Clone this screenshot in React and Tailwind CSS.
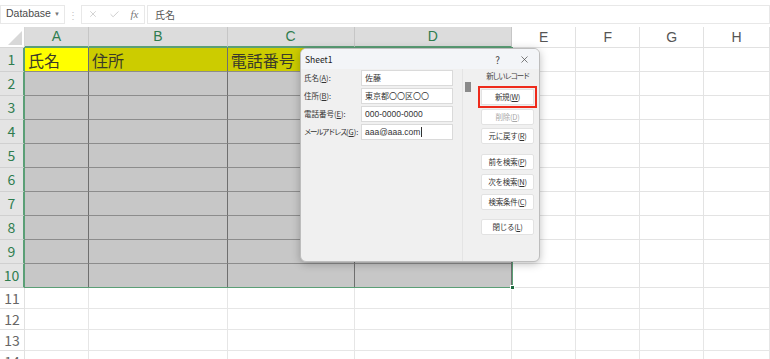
import { X, Check } from 'lucide-react'

const cols = [
  { l: 'A', w: 'w-[64px]', sel: true },
  { l: 'B', w: 'w-[139px]', sel: true },
  { l: 'C', w: 'w-[127px]', sel: true },
  { l: 'D', w: 'w-[158px]', sel: true },
  { l: 'E', w: 'w-[64px]' },
  { l: 'F', w: 'w-[64px]' },
  { l: 'G', w: 'w-[64px]' },
  { l: 'H', w: 'w-[66px]' }
]

const headerTexts = ['氏名', '住所', '電話番号', '']

const FormulaBar = () => (
  <div className="h-[27px] flex items-center pt-[1px] text-[#555]">
    <div className="w-[65px] h-[19px] flex items-center justify-between pl-[5px] pr-[4px] border border-[#e8e8e8] text-[10.5px] text-[#4a4a4a] font-['Liberation_Sans',sans-serif]">
      <span>Database</span>
      <span className="text-[6px] text-[#777]">▼</span>
    </div>
    <div className="w-[16px] text-center text-[10px] text-[#c4c4c4]">⋮</div>
    <div className="w-[64px] h-[19px] flex items-center justify-around border border-[#e8e8e8] text-[#b8b8b8]">
      <X className="w-[10px] h-[10px]" strokeWidth={1.5} />
      <Check className="w-[11px] h-[11px]" strokeWidth={1.5} />
      <span className="font-['Liberation_Serif',serif] italic text-[11px] text-[#777]">fx</span>
    </div>
    <div className="flex-1 h-[19px] ml-[2px] flex items-center pl-[7px] border border-[#e8e8e8] text-[10px] text-[#555]">
      氏名
    </div>
  </div>
)

const ColumnHeader = () => (
  <div className="flex h-[21px]">
    <div className="w-[25px] h-full border-r border-b border-[#d6d6d6] bg-white relative overflow-hidden">
      <div className="absolute right-[2px] bottom-[2px] w-0 h-0 border-l-[14px] border-l-transparent border-b-[14px] border-b-[#d8d8d8]" />
    </div>
    {cols.map((c) =>
      c.sel ? (
        <div
          key={c.l}
          className={`${c.w} h-full flex items-center justify-center bg-[#dcdcdc] border-r border-[#c6c6c6] border-b-2 border-b-[#5b9f76] text-[14px] text-[#2f7d4f] font-['Liberation_Sans',sans-serif]`}
        >
          {c.l}
        </div>
      ) : (
        <div
          key={c.l}
          className={`${c.w} h-full flex items-center justify-center bg-white border-r border-b border-[#e1e1e1] text-[14px] text-[#555] font-['Liberation_Sans',sans-serif]`}
        >
          {c.l}
        </div>
      )
    )}
  </div>
)

const SelectedRow = ({ n }) => (
  <div className="flex h-[24px]">
    <div className="w-[25px] h-full flex items-center justify-center bg-[#e4e4e4] border-b border-[#d0d0d0] border-r-2 border-r-[#5b9f76] text-[14px] text-[#2f7d4f]">
      {n}
    </div>
    {cols.map((c, i) =>
      c.sel ? (
        <div
          key={c.l}
          className={`${c.w} h-full flex items-center pl-[3px] border-r border-r-[#6f6f6f] border-b border-b-[#8c8c8c] text-[16px] text-[#3a3a2a] leading-none ${
            n === 1 ? (i === 0 ? 'bg-[#ffff00]' : 'bg-[#cccc00]') : 'bg-[#c7c7c7]'
          }`}
        >
          {n === 1 ? headerTexts[i] : ''}
        </div>
      ) : (
        <div key={c.l} className={`${c.w} h-full bg-white border-r border-b border-[#e3e3e3]`} />
      )
    )}
  </div>
)

const PlainRow = ({ n }) => (
  <div className="flex h-[21px]">
    <div className="w-[25px] h-full flex items-center justify-center bg-white border-r border-b border-[#e1e1e1] text-[14px] text-[#666]">
      {n}
    </div>
    {cols.map((c) => (
      <div key={c.l} className={`${c.w} h-full bg-white border-r border-b border-[#e6e6e6]`} />
    ))}
  </div>
)

const fields = [
  { label: '氏名', key: 'A', value: '佐藤' },
  { label: '住所', key: 'B', value: '東京都〇〇区〇〇' },
  { label: '電話番号', key: 'E', value: '000-0000-0000', latin: true },
  { label: 'メールアドレス', key: 'G', value: 'aaa@aaa.com', latin: true, cursor: true, narrow: true }
]

const DlgButton = ({ text, k, disabled, highlight, className = '' }) => (
  <div
    className={`w-[53px] h-[16px] flex items-center justify-center bg-white border border-[#e2e2e2] text-[7.5px] tracking-[-0.3px] leading-none whitespace-nowrap ${
      disabled ? 'text-[#a8a8a8]' : 'text-[#333]'
    } ${highlight ? 'outline-2 outline-offset-[1px] outline-[#ee2a1b]' : 'rounded-[2px]'} ${className}`}
  >
    {text}(<span className="underline">{k}</span>)
  </div>
)

const Dialog = () => (
  <div className="absolute left-[300px] top-[48px] w-[240px] h-[214px] bg-[#f0f0f0] border border-[#bdbdbd] rounded-[6px] shadow-[0_2px_8px_rgba(0,0,0,0.25)] overflow-hidden flex flex-col">
    {/* title bar */}
    <div className="h-[20px] flex items-center justify-between pl-[4px] pr-[9px] bg-[#f3f5f8] text-[8.5px] text-[#222]">
      <span>Sheet1</span>
      <div className="flex items-center gap-[19px] text-[10px] text-[#444]">
        <span>?</span>
        <X className="w-[11px] h-[11px]" strokeWidth={1.5} />
      </div>
    </div>
    <div className="flex-1 flex">
      {/* fields */}
      <div className="w-[162px] pt-[1px] pl-[3px] flex flex-col gap-[2px] border-r border-[#e4e4e4]">
        {fields.map((f) => (
          <div key={f.key} className="flex items-center h-[16px]">
            <span className="w-[57px] text-[7.5px] text-[#333] whitespace-nowrap leading-none">
              <span className={f.narrow ? 'tracking-[-1.5px]' : ''}>{f.label}</span>(<span className="underline">{f.key}</span>):
            </span>
            <div
              className={`w-[92px] h-[16px] flex items-center pl-[3px] bg-white border border-[#dadada] text-[#333] leading-none ${
                f.latin ? "font-['Liberation_Sans',sans-serif] text-[8.5px]" : 'text-[8px]'
              }`}
            >
              {f.value}
              {f.cursor && <span className="ml-[1px] w-px h-[10px] bg-[#333]" />}
            </div>
          </div>
        ))}
      </div>
      {/* scrollbar */}
      <div className="w-[10px] pt-[13px] flex justify-center">
        <div className="w-[6px] h-[10px] bg-[#8a8a8a]" />
      </div>
      {/* buttons */}
      <div className="flex-1 pl-[8px] pt-[3px] flex flex-col">
        <div className="w-[53px] text-center text-[7.5px] tracking-[-1.4px] text-[#444] leading-none h-[12px] whitespace-nowrap">
          新しいレコード
        </div>
        <DlgButton text="新規" k="W" highlight className="mt-[5px]" />
        <DlgButton text="削除" k="D" disabled className="mt-[4px]" />
        <DlgButton text="元に戻す" k="R" className="mt-[3px]" />
        <DlgButton text="前を検索" k="P" className="mt-[10px]" />
        <DlgButton text="次を検索" k="N" className="mt-[4px]" />
        <DlgButton text="検索条件" k="C" className="mt-[4px]" />
        <DlgButton text="閉じる" k="L" className="mt-[9px]" />
      </div>
    </div>
  </div>
)

export default function App() {
  return (
    <div className="w-[770px] h-[359px] overflow-hidden bg-white relative font-['Noto_Sans_CJK_JP','Liberation_Sans',sans-serif]">
      <FormulaBar />
      <ColumnHeader />
      <div className="relative">
        {[1, 2, 3, 4, 5, 6, 7, 8, 9, 10].map((n) => (
          <SelectedRow key={n} n={n} />
        ))}
        {/* selection outline */}
        <div className="absolute left-[24px] top-[-1px] w-[489px] h-[241px] border border-[#5b9f76] pointer-events-none" />
        <div className="absolute left-[510px] top-[237px] w-[5px] h-[5px] bg-[#1e6b40] border border-white pointer-events-none" />
      </div>
      {[11, 12, 13, 14].map((n) => (
        <PlainRow key={n} n={n} />
      ))}
      <Dialog />
    </div>
  )
}
